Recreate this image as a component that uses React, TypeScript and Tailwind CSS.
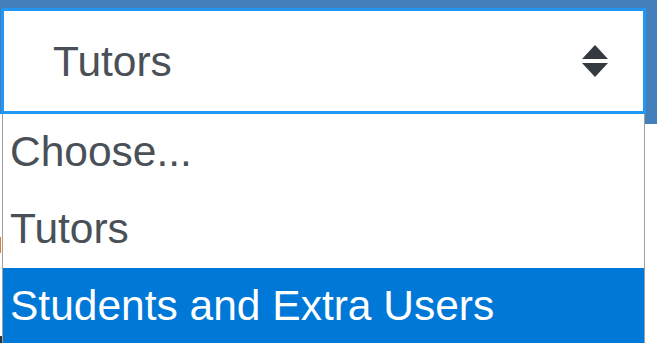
import React from "react";

export default function App() {
  const font = { fontFamily: '"Liberation Sans", Arial, sans-serif' };
  return (
    <div className="w-[657px] h-[343px] overflow-hidden bg-white flex flex-col" style={font}>
      <div className="h-[114px] shrink-0 bg-[#4380bb] pt-[8px] pl-[1px]">
        <div className="w-[645px] h-[106px] bg-white border-[3px] border-[#2196f3] flex items-center justify-between pl-[49px] pr-[35px]">
          <span className="text-[42.5px] leading-none text-[#495057] pt-[2px]">Tutors</span>
          <svg width="26" height="32" viewBox="0 0 26 32" className="block">
            <polygon points="13,0 26,14 0,14" fill="#343a40" />
            <polygon points="0,18 26,18 13,32" fill="#343a40" />
          </svg>
        </div>
      </div>
      <div className="flex flex-1 min-h-0">
        <div className="w-[2px] flex flex-col pt-[123px]">
          <div className="w-[1px] h-[16px] bg-[#e07a2c]" />
          <div className="flex-1" />
          <div className="w-[2px] h-[7px] bg-[#333]" />
        </div>
        <div className="w-[643px] bg-white border-x border-[#a0a0a0] flex flex-col">
          <div className="h-[77px] shrink-0 flex items-center pl-[7px] text-[42.5px] leading-none text-[#495057]">Choose...</div>
          <div className="h-[77px] shrink-0 flex items-center pl-[7px] text-[42.5px] leading-none text-[#495057]">Tutors</div>
          <div className="h-[77px] shrink-0 flex items-center pl-[7px] text-[42.5px] leading-none text-white bg-[#0078d7]">Students and Extra Users</div>
        </div>
        <div className="w-[12px]">
          <div className="h-[10px] bg-[#4380bb]" />
        </div>
      </div>
    </div>
  );
}
